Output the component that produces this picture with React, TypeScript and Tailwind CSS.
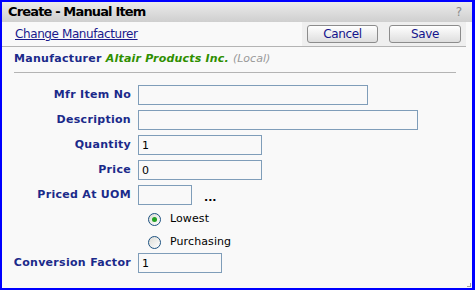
import React from "react";

const font = { fontFamily: '"DejaVu Sans", Verdana, sans-serif' };

const Field = ({
  label,
  width,
  value,
  className = "",
  children,
}: {
  label: string;
  width: string;
  value?: string;
  className?: string;
  children?: React.ReactNode;
}) => (
  <div className={`flex items-center h-[20px] ${className}`}>
    <label className="w-[136px] pr-[7px] text-right text-[11px] font-bold tracking-[0.3px] text-[#1b2a8a]">
      {label}
    </label>
    <input
      readOnly
      value={value ?? ""}
      className={`${width} h-[20px] border border-[#7f9db9] bg-[#f9f9f9] px-[3px] text-[11px] text-black outline-none`}
    />
    {children}
  </div>
);

const Radio = ({ checked, label }: { checked?: boolean; label: string }) => (
  <div className="flex items-center h-[20px] pl-[146px] gap-[9px]">
    <span className="w-[13px] h-[13px] rounded-full border border-[#1c5180] bg-gradient-to-br from-[#dcdcd7] to-white flex items-center justify-center">
      {checked && <span className="w-[5px] h-[5px] rounded-full bg-[#21a121]" />}
    </span>
    <span className="text-[11px] tracking-[0.1px] text-black">{label}</span>
  </div>
);

export default function App() {
  return (
    <div style={font} className="w-[475px] h-[290px] bg-[#0000ff] pt-[2px] pl-[2px] pr-[3px] pb-[2px]">
      <div className="relative flex flex-col h-full bg-[#f9f9f9]">
        <div className="flex items-center justify-between h-[20px] pl-[6px] pr-[10px] bg-gradient-to-b from-[#ebebeb] to-[#cfcfcf]">
          <span className="text-[13px] font-bold tracking-[-0.85px] text-black">Create - Manual Item</span>
          <span className="text-[12px] text-[#8a8a8a]">?</span>
        </div>

        <div className="flex items-stretch justify-between h-[25px] border-b border-[#b4b4b4] mr-[6px]">
          <a className="self-center pl-[13px] text-[12px] tracking-[-0.4px] text-[#1a1a8c] underline">
            Change Manufacturer
          </a>
          <div className="flex items-center gap-[11px] px-[5px] bg-[#efefef]">
            <button className="w-[71px] h-[18px] rounded-[3px] border border-[#8c8c8c] bg-gradient-to-b from-white to-[#dedede] text-[12px] tracking-[-0.4px] text-[#14148c] leading-none">
              Cancel
            </button>
            <button className="w-[72px] h-[18px] rounded-[3px] border border-[#8c8c8c] bg-gradient-to-b from-white to-[#dedede] text-[12px] tracking-[-0.4px] text-[#14148c] leading-none">
              Save
            </button>
          </div>
        </div>

        <div className="flex items-center h-[25px] pl-[12px] gap-[4px] text-[11px]">
          <span className="font-bold tracking-[0.3px] text-[#1b2a8a]">Manufacturer</span>
          <span className="font-bold italic tracking-[0.2px] text-[#2f8f00]">Altair Products Inc.</span>
          <span className="italic text-[#9a9a9a]">(Local)</span>
        </div>
        <div className="ml-[12px] mr-[16px] border-b border-[#b4b4b4]" />

        <div className="flex flex-col gap-[5px] pt-[12px]">
          <Field label="Mfr Item No" width="w-[230px]" />
          <Field label="Description" width="w-[280px]" />
          <Field label="Quantity" width="w-[124px]" value="1" />
          <Field label="Price" width="w-[124px]" value="0" />
          <Field label="Priced At UOM" width="w-[54px]">
            <span className="ml-[12px] mt-[4px] text-[11px] font-bold leading-none text-black">...</span>
          </Field>
          <div className="flex flex-col gap-[3px] -mt-[1px]">
            <Radio checked label="Lowest" />
            <Radio label="Purchasing" />
          </div>
          <Field label="Conversion Factor" width="w-[84px]" value="1" className="-mt-[4px]" />
        </div>

        <span className="absolute right-[1px] bottom-[1px] w-[4px] h-[4px] border-r border-b border-[#a0a0a0]" />
      </div>
    </div>
  );
}
